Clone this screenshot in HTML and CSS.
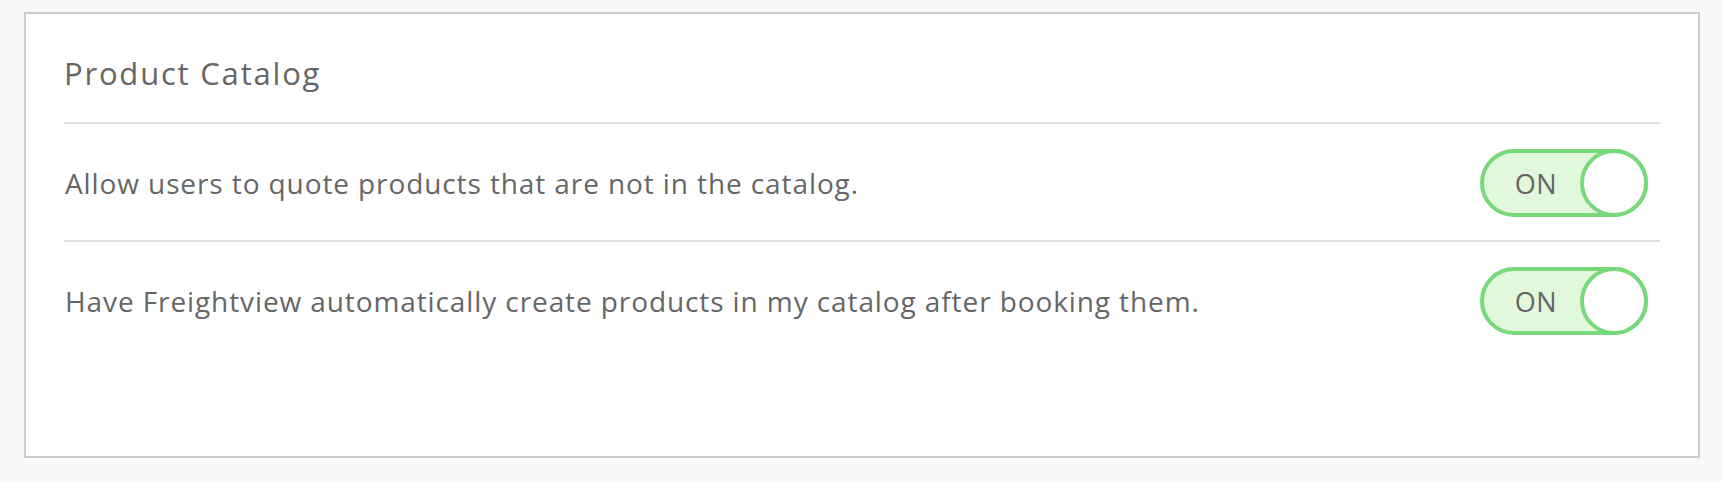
FILE: index.html
```html
<!DOCTYPE html>
<html>
<head>
<meta charset="utf-8">
<link rel="stylesheet" href="styles.css">
</head>
<body>
<section class="card">
  <header class="card-header">
    <h2 class="card-title">Product Catalog</h2>
  </header>
  <div class="setting-row">
    <span class="setting-label">Allow users to quote products that are not in the catalog.</span>
    <button class="toggle" type="button"><span class="toggle-text">ON</span><span class="toggle-knob"></span></button>
  </div>
  <div class="setting-row last">
    <span class="setting-label">Have Freightview automatically create products in my catalog after booking them.</span>
    <button class="toggle" type="button"><span class="toggle-text">ON</span><span class="toggle-knob"></span></button>
  </div>
</section>
</body>
</html>
```

FILE: styles.css
```css
html, body {
  margin: 0;
  padding: 0;
  background: #f8f8f8;
}
body {
  font-family: "Open Sans", "Liberation Sans", sans-serif;
  color: #666666;
  padding: 12px 22px 24px 24px;
}
.card {
  box-sizing: border-box;
  height: 446px;
  background: #ffffff;
  border: 2px solid #cccccc;
  padding: 0 38px;
}
.card-header {
  box-sizing: border-box;
  height: 110px;
  border-bottom: 2px solid #e0e0e0;
  display: flex;
  align-items: center;
  padding-top: 10px;
}
.card-title {
  margin: 0;
  font-size: 31px;
  font-weight: 400;
  letter-spacing: 1.8px;
  color: #666666;
}
.setting-row {
  display: flex;
  align-items: center;
  justify-content: space-between;
  padding: 25px 12px 23px 1px;
  border-bottom: 2px solid #e0e0e0;
}
.setting-row.last {
  border-bottom: none;
}
.setting-label {
  font-size: 28px;
  letter-spacing: 0.9px;
}
.toggle {
  box-sizing: border-box;
  width: 168px;
  height: 68px;
  padding: 0;
  border: 4px solid #77d97a;
  border-radius: 34px;
  background: #e2f8dd;
  display: flex;
  align-items: center;
  cursor: pointer;
  font-family: inherit;
}
.toggle-text {
  flex: 1;
  text-align: center;
  font-size: 27px;
  letter-spacing: 0.5px;
  color: #666666;
  padding-left: 8px;
}
.toggle-knob {
  box-sizing: border-box;
  width: 68px;
  height: 68px;
  margin: -4px -4px -4px 0;
  border: 4px solid #77d97a;
  border-radius: 50%;
  background: #ffffff;
}
```
